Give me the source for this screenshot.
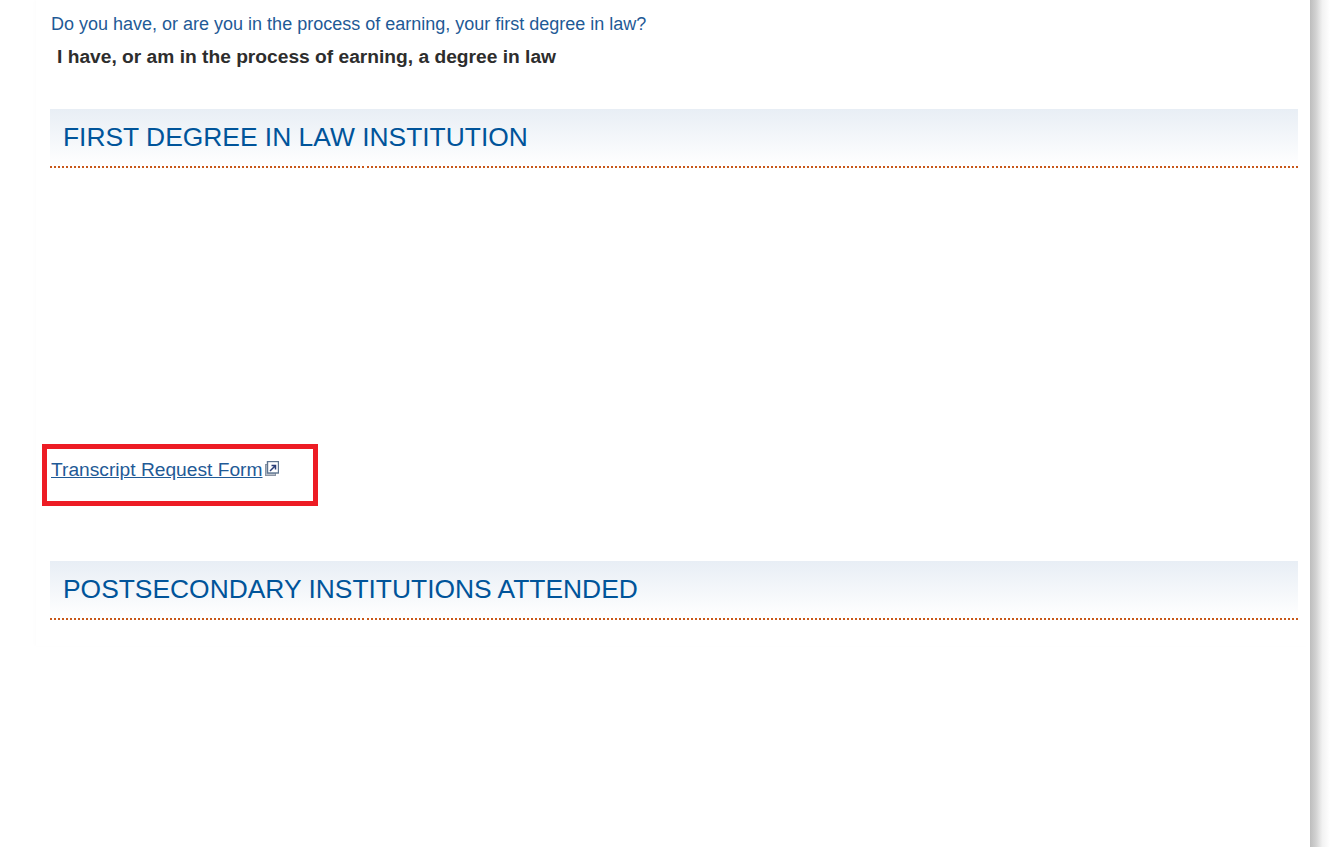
<script lang="ts">
  const sections = [
    { title: "FIRST DEGREE IN LAW INSTITUTION" },
    { title: "POSTSECONDARY INSTITUTIONS ATTENDED" },
  ];
</script>

<div class="page">
  <main class="panel">
    <div class="inner">
      <p class="question">Do you have, or are you in the process of earning, your first degree in law?</p>
      <p class="answer">I have, or am in the process of earning, a degree in law</p>

      <h2 class="section-head first">{sections[0].title}</h2>

      <div class="link-row">
        <a href="#form" class="form-link">Transcript Request Form</a>
        <svg class="ext-icon" width="14" height="15" viewBox="0 0 14 15" aria-hidden="true">
          <rect x="0.5" y="3.5" width="10" height="11" fill="#b9bfc9" stroke="#8a94a3" />
          <rect x="2.5" y="0.5" width="11" height="11.5" fill="#fff" stroke="#5f7590" stroke-width="1.4" />
          <path d="M5 10 L10 5 M6.5 4.5 H10.5 V8.5" fill="none" stroke="#2c3f78" stroke-width="1.5" />
        </svg>
        <div class="callout"></div>
      </div>

      <h2 class="section-head second">{sections[1].title}</h2>
    </div>
  </main>
  <div class="edge"></div>
</div>

<style>
  :global(body) {
    margin: 0;
    background: #fff;
    font-family: "Liberation Sans", Arial, sans-serif;
  }

  .page {
    display: flex;
    height: 847px;
    overflow: hidden;
    background: #fff;
  }

  .panel {
    width: 1274px;
    margin-left: 36px;
    background: #fff;
  }

  .inner {
    box-sizing: border-box;
    height: 646px;
    padding: 0 12px 0 14px;
    box-shadow: -2px 0 3px rgba(0, 0, 0, 0.012);
  }

  .question {
    margin: 0;
    padding: 14px 0 0 1px;
    font-size: 18px;
    line-height: 20px;
    color: #1f5a96;
  }

  .answer {
    margin: 0;
    padding: 12px 0 0 7px;
    font-size: 19.2px;
    line-height: 22px;
    font-weight: 700;
    color: #2d2d2d;
  }

  .section-head {
    margin: 0;
    height: 59px;
    padding-left: 13px;
    font-size: 26.4px;
    font-weight: 400;
    line-height: 57px;
    color: #00549a;
    background:
      repeating-linear-gradient(to right, #c8581a 0 2px, transparent 2px 4.0064px) bottom / 100% 2px no-repeat,
      linear-gradient(to bottom, #e8eef5, #fff 57px);
  }

  .first {
    margin-top: 41px;
  }

  .second {
    margin-top: 55px;
  }

  .link-row {
    position: relative;
    display: flex;
    align-items: flex-start;
    height: 47px;
    margin-top: 291px;
    padding-left: 1px;
  }

  .form-link {
    font-size: 19.2px;
    line-height: 22px;
    color: #1f5a96;
    text-decoration: underline;
  }

  .ext-icon {
    margin: 2px 0 0 3px;
  }

  .callout {
    position: absolute;
    left: -8px;
    top: -15px;
    width: 266px;
    height: 52px;
    border: 5px solid #ed1c24;
  }

  .edge {
    width: 20px;
    background: linear-gradient(to right, #bdbdbd, #d2d2d2 30%, #f2f2f2 62%, #fff);
  }
</style>
